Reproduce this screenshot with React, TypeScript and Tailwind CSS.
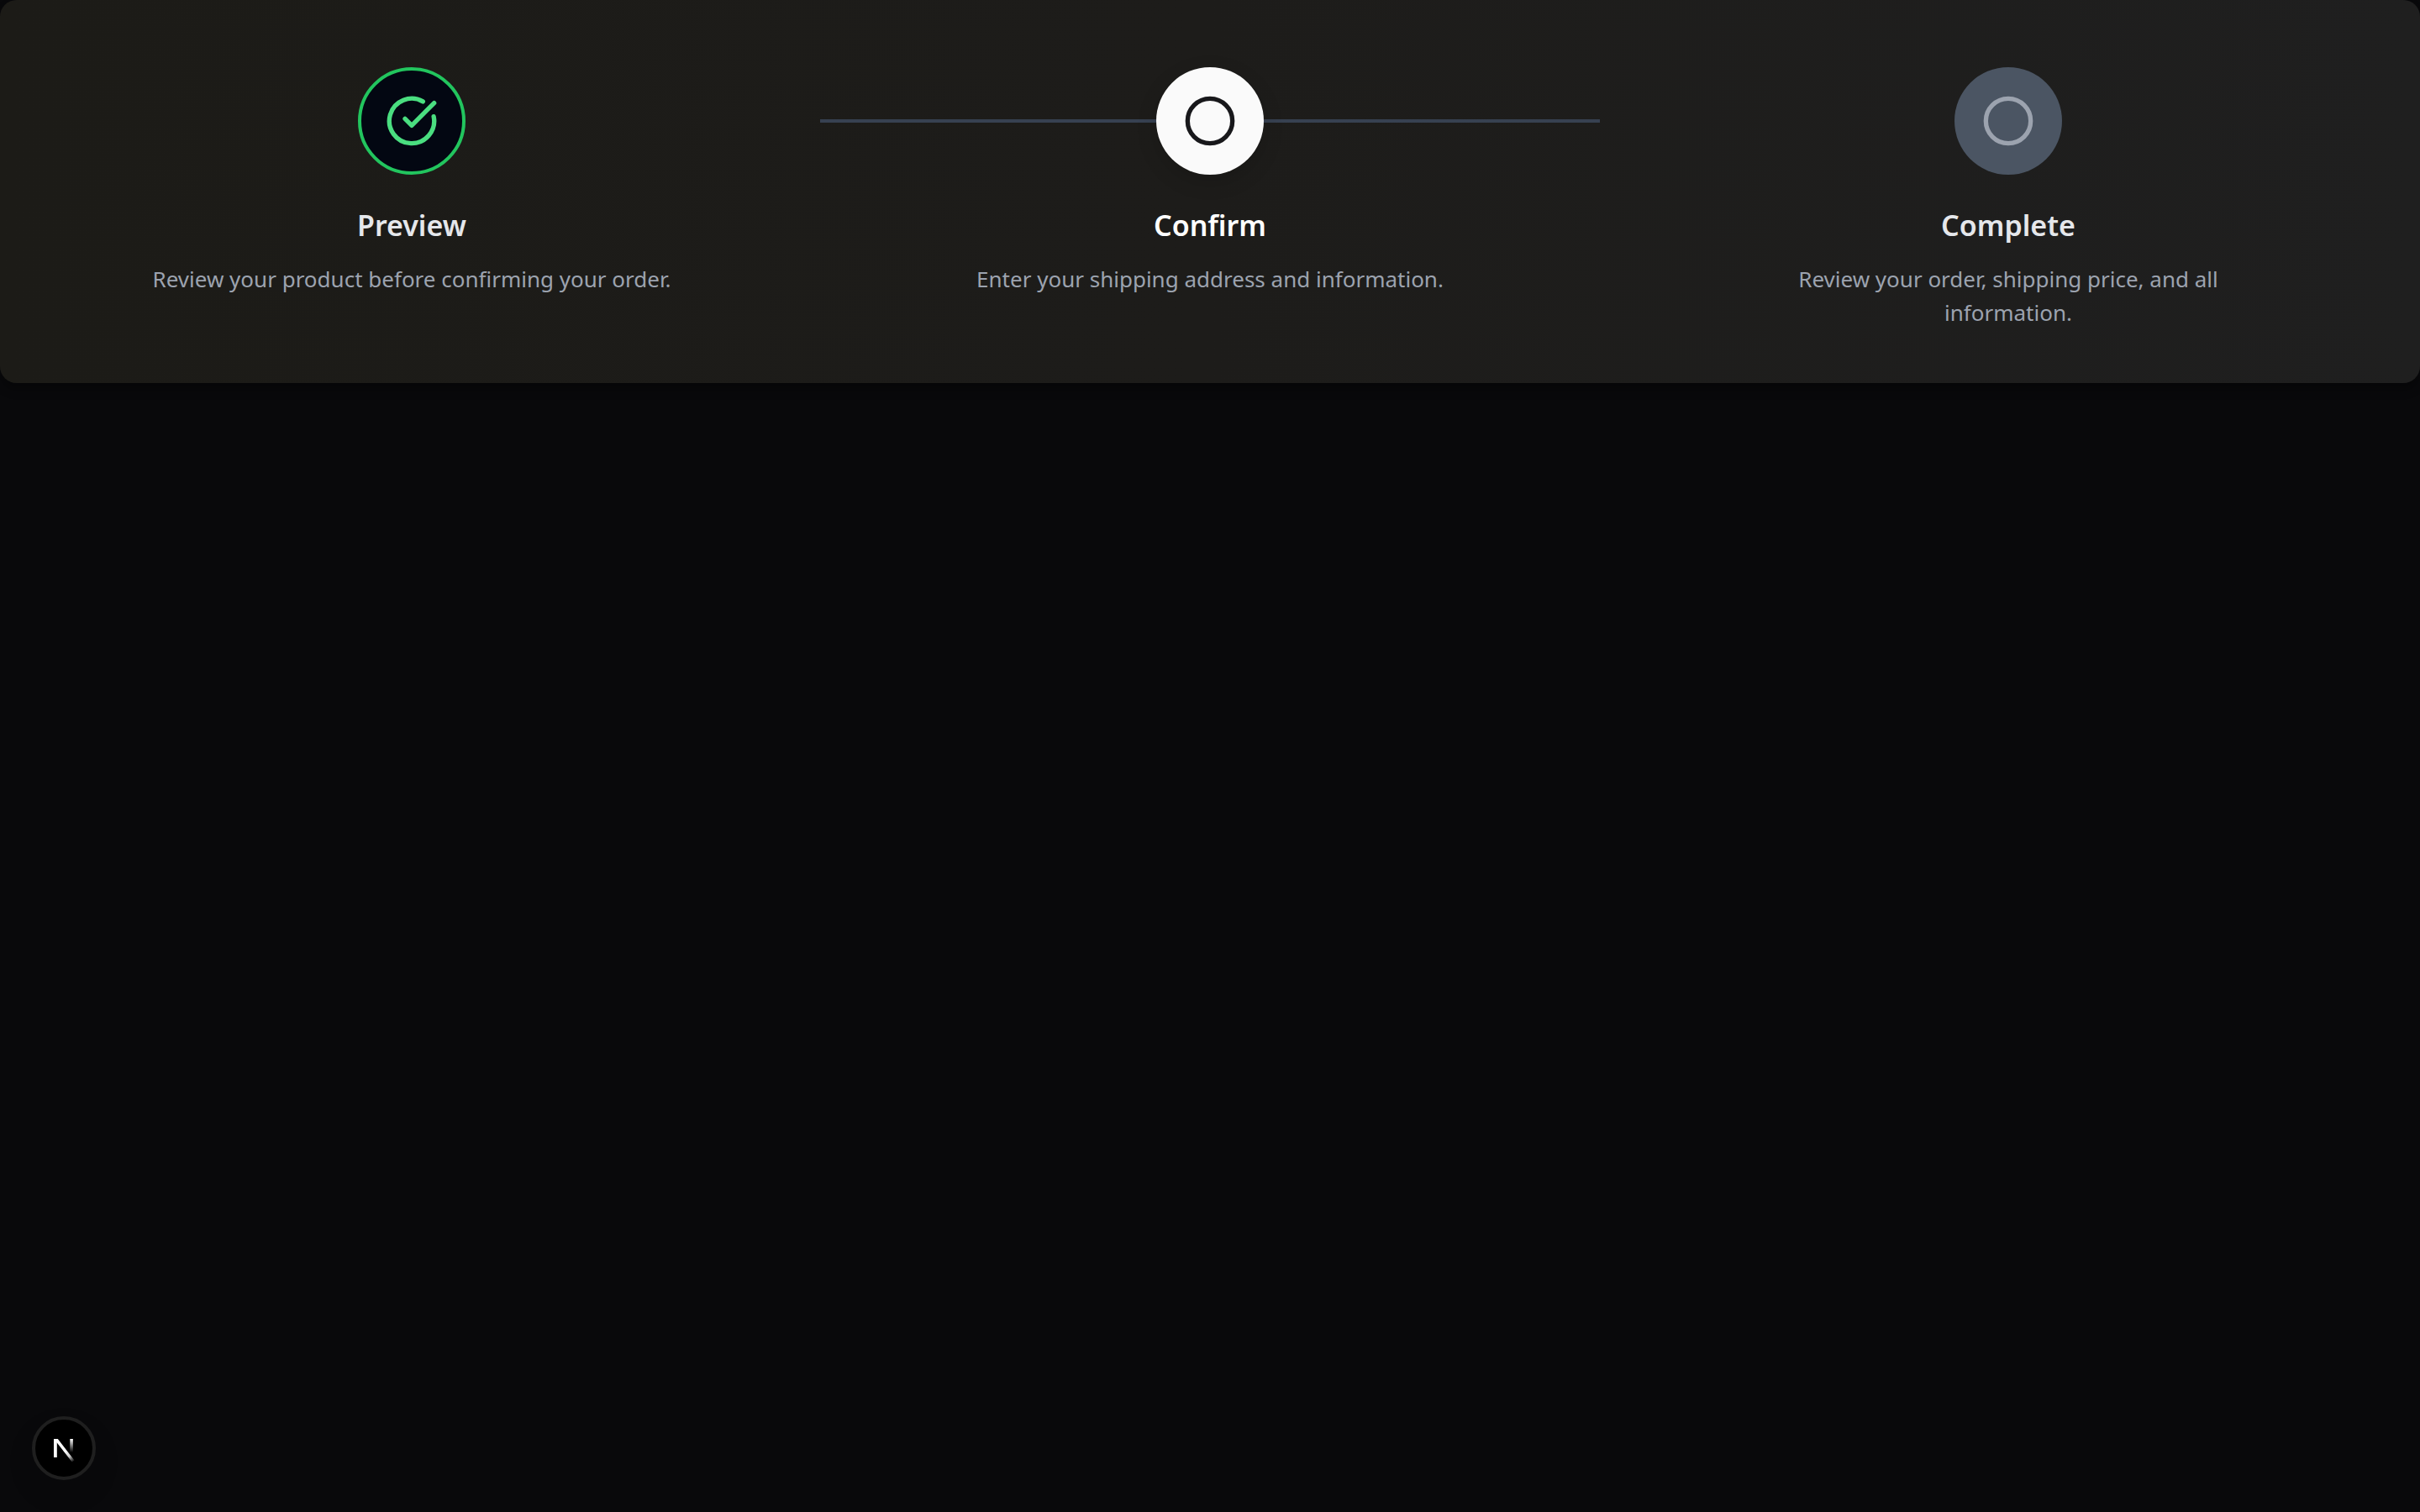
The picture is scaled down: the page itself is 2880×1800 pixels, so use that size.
import { Circle, CircleCheckBig } from "lucide-react";

type Status = "done" | "current" | "upcoming";

const steps: { title: string; text: string; status: Status }[] = [
  { title: "Preview", text: "Review your product before confirming your order.", status: "done" },
  { title: "Confirm", text: "Enter your shipping address and information.", status: "current" },
  { title: "Complete", text: "Review your order, shipping price, and all information.", status: "upcoming" },
];

const circleStyles: Record<Status, string> = {
  done: "border-4 border-[#22c55e] bg-[#030712] text-[#4ade80]",
  current: "bg-[#fafafa] text-[#18181b] shadow-[0_8px_24px_rgba(0,0,0,0.15)]",
  upcoming: "bg-[#4b5563] text-[#9ca3af]",
};

function Step({ title, text, status }: (typeof steps)[number]) {
  const Icon = status === "done" ? CircleCheckBig : Circle;
  return (
    <li className="relative flex flex-col items-center text-center">
      {status === "current" && (
        <span aria-hidden="true" className="absolute -inset-x-1 top-[62px] h-1 bg-[#374151]" />
      )}
      <button
        type="button"
        aria-label={title}
        className={`relative flex size-32 items-center justify-center rounded-full ${circleStyles[status]}`}
      >
        <Icon className="size-16" strokeWidth={2} />
      </button>
      <h2
        className={`mt-8 text-[34px] leading-[56px] font-semibold ${status === "current" ? "text-white" : "text-[#e5e7eb]"}`}
      >
        {title}
      </h2>
      <p className="mt-4 max-w-[640px] text-[26px] leading-10 text-[#9ca3af]">{text}</p>
    </li>
  );
}

function NextMark() {
  return (
    <svg viewBox="0 0 40 40" className="size-10" fill="none" aria-hidden="true">
      <defs>
        <linearGradient id="diagonal" x1="22" y1="23" x2="32" y2="36" gradientUnits="userSpaceOnUse">
          <stop stopColor="white" />
          <stop offset="0.5" stopColor="white" stopOpacity="0.8" />
          <stop offset="1" stopColor="white" stopOpacity="0" />
        </linearGradient>
        <linearGradient id="stem" x1="29" y1="9" x2="29" y2="25" gradientUnits="userSpaceOnUse">
          <stop stopColor="white" />
          <stop offset="1" stopColor="white" stopOpacity="0" />
        </linearGradient>
      </defs>
      <path d="M8 9h3.800v22H8z" fill="white" />
      <path d="M8 9h4.800L32.500 34.500A16 16 0 0 1 29.700 36.500L11.800 13.500 8 12z" fill="url(#diagonal)" />
      <path d="M27.300 9h3.600v16h-3.600z" fill="url(#stem)" />
    </svg>
  );
}

export default function App() {
  return (
    <div className="min-h-screen bg-[#09090b] font-['Noto_Sans','Open_Sans',sans-serif]">
      <main>
        <ol className="grid grid-cols-3 gap-[30px] rounded-[20px] bg-linear-to-r from-[#1c1b17] via-[#1d1c1a] to-[#1f1f1f] px-[30px] pt-20 pb-16 shadow-[0_8px_12px_rgba(0,0,0,0.3)]">
          {steps.map((step) => (
            <Step key={step.title} {...step} />
          ))}
        </ol>
      </main>
      <button
        type="button"
        aria-label="Open Next.js Dev Tools"
        className="fixed bottom-[38px] left-[38px] flex size-[76px] items-center justify-center rounded-full border-4 border-[#1f1f1f] bg-black shadow-[0_16px_32px_rgba(0,0,0,0.12)]"
      >
        <NextMark />
      </button>
    </div>
  );
}
